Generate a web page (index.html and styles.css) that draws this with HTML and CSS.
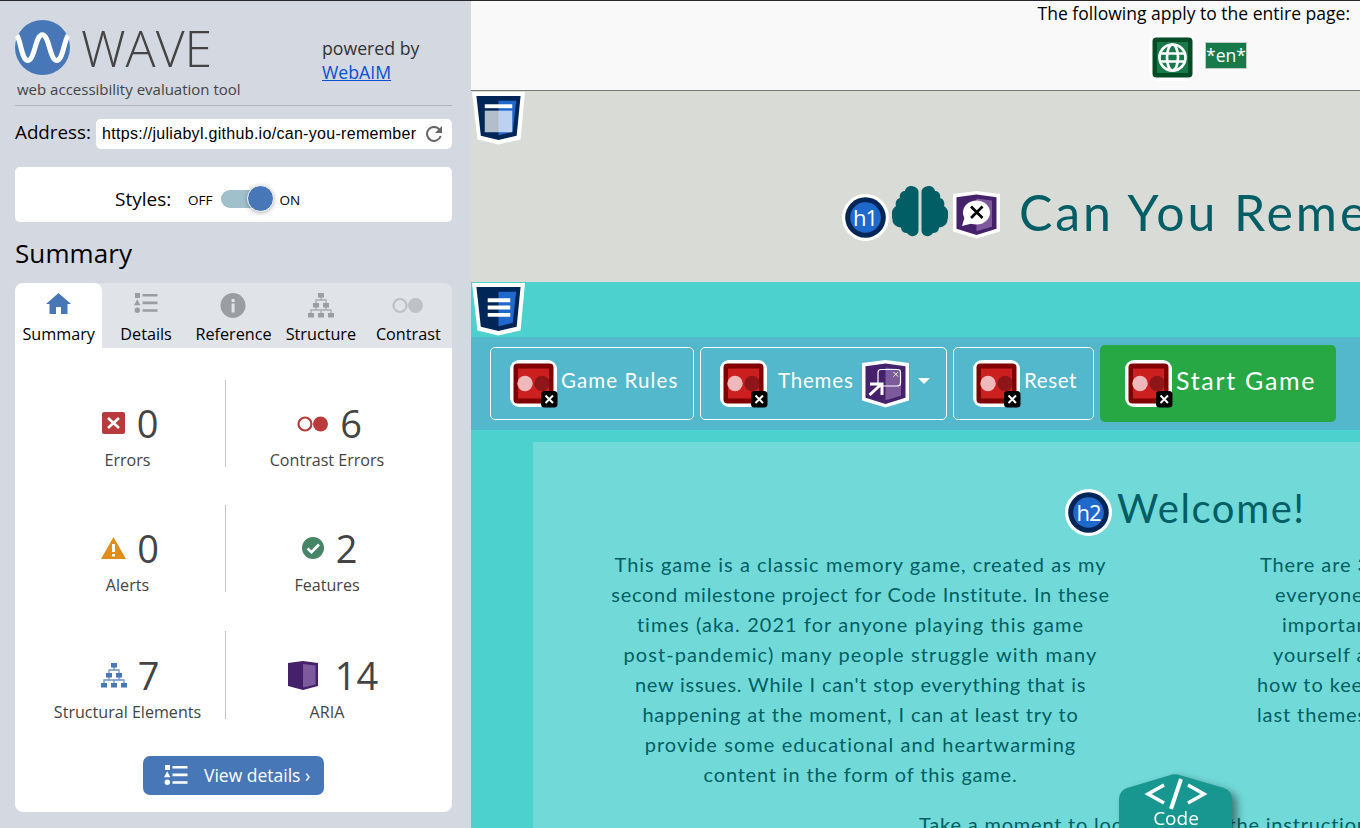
FILE: index.html
```html
<!DOCTYPE html>
<html lang="en">
<head>
<meta charset="utf-8">
<title>WAVE Report</title>
<link rel="stylesheet" href="styles.css">
</head>
<body>
<svg class="defs" width="0" height="0">
  <defs>
    <symbol id="list" viewBox="0 0 24 22"><path d="M1 1h5v5H1zM0 13.300l3.200-6 3.200 6zM8.500 2h15v2.600h-15zM8.500 9.600h15v2.600h-15zM8.500 17.200h15v2.600h-15z"/><circle cx="3.300" cy="18.300" r="2.700"/></symbol>
    <symbol id="tree" viewBox="0 0 26 25"><path d="M10 0h6v4.500h-6zM5 10h6v4.500H5zM15 10h6v4.500h-6zM0 20h6v4.500H0zM10 20h6v4.500h-6zM20 20h6v4.500h-6z"/><path d="M13 4v3M8 10V7h10v3M8 14v3M18 14v3M3 20v-3h20v3M13 17v3" fill="none" stroke="currentColor" stroke-width="1.300" opacity=".8"/></symbol>
    <symbol id="contrast" viewBox="0 0 32 16"><circle cx="8" cy="8" r="6.500" fill="none" stroke="currentColor" stroke-width="2.200"/><circle cx="23.500" cy="8" r="7.500"/></symbol>
    <symbol id="red" viewBox="0 0 48 48"><rect width="47" height="47" rx="9" fill="#fff"/><rect x="3.500" y="3.500" width="40" height="40" rx="4" fill="#800000"/><rect x="8" y="8.500" width="31" height="30" fill="#cc1f1f"/><circle cx="15" cy="23.500" r="7.700" fill="#efb9bb"/><circle cx="32" cy="23.500" r="7.700" fill="#8e1619"/><rect x="31" y="31" width="16.500" height="16.500" rx="3.500" fill="#000"/><path d="M35.500 35.500l7.500 7.500M43 35.500l-7.500 7.500" stroke="#fff" stroke-width="2"/></symbol>
    <symbol id="shield" viewBox="0 0 54 54"><path d="M0 0h54l-4.500 48.300L27 53.500 5.500 48.300z" fill="#fff"/><path d="M4.500 4.200h45L45.500 44.500 27 49 9 44.500z" fill="#002557"/><path d="M27 9h18l-3.500 31.500L27 44z" fill="#2069cc"/></symbol>
    <symbol id="purple" viewBox="0 0 47 48"><path d="M0 3L23.500 0 47 3v37.500L23.500 47.500 0 40.500z" fill="#fff"/><path d="M3.500 6.300l20-2.800 20 2.800v31.400l-20 6.200-20-6.200z" fill="#46216b"/><path d="M23.500 7.500l15.500 2v26.300l-15.500 4.400z" fill="#7c5a9c"/></symbol>
    <symbol id="disc" viewBox="0 0 48 48"><circle cx="23.500" cy="23.500" r="23.500" fill="#fff"/><circle cx="23.500" cy="23.500" r="20.300" fill="#002557"/><circle cx="23.500" cy="23.500" r="15.300" fill="#2069cc"/></symbol>
  </defs>
</svg>
<div class="app">
  <aside class="side">
    <header class="brand">
      <div>
        <div class="logo">
          <svg width="56" height="56" viewBox="0 0 56 56"><circle cx="27.500" cy="27.500" r="27.500" fill="#4877b7"/><path d="M2 15.500C6 21 6.500 40.500 13 40.500S20.500 14.800 27.300 14.800 35 40.500 41.500 40.500 49 21 53 15.500" fill="none" stroke="#fff" stroke-width="5"/></svg>
          <span class="wave">WAVE</span>
        </div>
        <div class="tagline">web accessibility evaluation tool</div>
      </div>
      <div class="powered">powered by<br><a href="#">WebAIM</a></div>
    </header>
    <div class="address"><label>Address:</label><div class="url"><span>https://juliabyl.github.io/can-you-remember</span>
      <svg width="16" height="16" viewBox="0 0 16 16"><path d="M13.400 3.400A7 7 0 1 0 14.700 10" fill="none" stroke="#666" stroke-width="2"/><path d="M16 0v7H9z" fill="#666"/></svg></div></div>
    <div class="styles"><span class="styles-label">Styles:</span><small>OFF</small><span class="switch"><i></i></span><small>ON</small></div>
    <h2>Summary</h2>
    <nav class="tabs">
      <div class="tab active"><svg width="25" height="22" viewBox="0 0 25 22"><path d="M12.500 0L25 11h-3.500v10h-6.500v-7h-5v7H3.500V11H0z"/></svg>Summary</div>
      <div class="tab"><svg class="up" width="24" height="22"><use href="#list"/></svg>Details</div>
      <div class="tab"><svg width="26" height="26" viewBox="0 0 26 26"><circle cx="13" cy="12.500" r="12.500"/><path d="M11.600 6h3v3h-3zM11.600 10.500h3v9h-3z" fill="#e0e3e8"/></svg>Reference</div>
      <div class="tab"><svg width="26" height="25"><use href="#tree"/></svg>Structure</div>
      <div class="tab faint"><svg width="32" height="26" viewBox="0 0 32 26"><use href="#contrast" y="4.500" width="32" height="16"/></svg>Contrast</div>
    </nav>
    <section class="panel">
      <div class="row"><div class="stat left"><div class="num"><svg width="24" height="23" viewBox="0 0 24 23"><rect width="23" height="22" rx="2" fill="#b93a3c"/><path d="M6 6l11 10M17 6L6 16" stroke="#fff" stroke-width="2.600"/></svg>0</div>Errors</div>
      <div class="stat"><div class="num"><svg class="red" width="32" height="16"><use href="#contrast"/></svg>6</div>Contrast Errors</div></div>
      <div class="row"><div class="stat left"><div class="num"><svg width="25" height="23" viewBox="0 0 25 23"><path d="M12.500 0L25 22H0z" fill="#e08d1b"/><path d="M11 7h3v8h-3zM11 17h3v2.500h-3z" fill="#fff"/></svg>0</div>Alerts</div>
      <div class="stat"><div class="num"><svg width="23" height="23" viewBox="0 0 23 23"><circle cx="11" cy="11" r="11" fill="#478567"/><path d="M5.500 11.500l4 3.700 7.500-7.700" fill="none" stroke="#fff" stroke-width="2.600"/></svg>2</div>Features</div></div>
      <div class="row last"><div class="stat left"><div class="num"><svg class="blue" width="26" height="25"><use href="#tree"/></svg>7</div>Structural Elements</div>
      <div class="stat"><div class="num aria"><svg width="30" height="29" viewBox="0 0 30 29"><path d="M0 2l15-2 15 2v23l-15 4-15-4z" fill="#46216b"/><path d="M15 3l12.500 1.500v19L15 26.500z" fill="#7c5a9c"/></svg>14</div>ARIA</div></div>
      <a class="view" href="#"><svg width="24" height="22"><use href="#list"/></svg>View details ›</a>
    </section>
  </aside>
  <main class="page">
    <section class="whole">
      <div class="apply">The following apply to the entire page:</div>
      <div class="lang"><svg width="47" height="47" viewBox="0 0 47 47"><rect width="47" height="47" rx="9" fill="#fff"/><rect x="3.500" y="3.500" width="40" height="40" rx="4" fill="#004d25"/><rect x="8" y="8" width="31" height="31" fill="#18794a"/><g fill="none" stroke="#fff" stroke-width="2.700"><circle cx="23.500" cy="23.500" r="13"/><ellipse cx="23.500" cy="23.500" rx="5.500" ry="13"/><path d="M10.500 19.500h26M10.500 27.500h26"/></g></svg><b>*en*</b></div>
    </section>
    <header class="hero">
      <svg class="shield" width="53" height="53" viewBox="0 0 54 54"><use href="#shield" width="54" height="54"/><path d="M13 12.500h28v4H13z" fill="#fff"/><path d="M13 19h28v22H13z" fill="#fff" opacity=".7"/></svg>
      <h1><svg class="h1i" width="48" height="48"><use href="#disc"/><text x="23" y="32" text-anchor="middle" class="htext">h1</text></svg>
        <svg class="brain" width="56" height="51" viewBox="0 0 56 51"><path id="lobe" d="M26.500 6C26.500 1 21 0 18 0 14 1 13 4 13 5 9 5 7 9 8 12 4 13 3 17 4 20-1 23-1 30 0.500 33 0 38 4 41 9 41.500 9 46 13 47 15 47 18 52 26.500 51 26.500 44z"/><use href="#lobe" transform="matrix(-1 0 0 1 56 0)"/></svg>
        <svg class="bubble" width="47" height="48"><use href="#purple"/><ellipse cx="23.500" cy="21.500" rx="13.500" ry="12" fill="#fff"/><path d="M12 25l-3 10 12-3z" fill="#fff"/><path d="M18 15.500l11.500 11.500M29.500 15.500L18 27" stroke="#000" stroke-width="2.700"/></svg>
        <span>Can You Remember</span></h1>
    </header>
    <div class="band"><svg class="shield" width="53" height="53" viewBox="0 0 54 54"><use href="#shield" width="54" height="54"/><path d="M16 15.500h23v4H16zM16 23h23v4H16zM16 30.500h23v4H16z" fill="#fff"/></svg></div>
    <nav class="bar">
      <div class="btn rules"><svg width="48" height="48"><use href="#red"/></svg><span>Game Rules</span></div>
      <div class="btn themes"><svg width="48" height="48"><use href="#red"/></svg><span>Themes</span><svg class="popup" width="47" height="48"><use href="#purple"/><rect x="16" y="9.500" width="22.500" height="16.500" rx="3" fill="none" stroke="#fff" stroke-width="1.200"/><path d="M31.500 12l4.500 4.500M36 12l-4.500 4.500" stroke="#fff" stroke-width="1"/><path d="M7.500 35L20 23.500M8 24h12v11" fill="none" stroke="#fff" stroke-width="3"/></svg><i class="caret"></i></div>
      <div class="btn reset"><svg width="48" height="48"><use href="#red"/></svg><span>Reset</span></div>
      <div class="btn start"><svg width="48" height="48"><use href="#red"/></svg><span>Start Game</span></div>
    </nav>
    <section class="content">
      <h3><svg width="48" height="48"><use href="#disc"/><text x="23.500" y="32" text-anchor="middle" class="htext">h2</text></svg><span>Welcome!</span></h3>
      <div class="cols">
        <p class="first"><span class="wide">This game is a classic memory game, created as my</span><span class="tight">second milestone project for Code Institute. In these</span><span class="wider">times (aka. 2021 for anyone playing this game</span><span class="widest">post-pandemic) many people struggle with many</span><span class="tight">new issues. While I can't stop everything that is</span><span>happening at the moment, I can at least try to</span><span class="wider">provide some educational and heartwarming</span><span>content in the form of this game.</span></p>
        <p class="second"><span class="in-a">There are 3</span><span class="in-b">everyone</span><span class="in-c">important</span><span class="in-d">yourself and</span><span>how to keep</span><span>last themes</span></p>
      </div>
      <p class="take">Take a moment to look through <span>the instructions</span></p>
    </section>
  </main>
</div>
<div class="code"><svg width="140" height="64" viewBox="0 0 140 64"><path d="M50 1.500Q56 -1 62 1.500L105 14Q113 17 113 25V64H0V25Q0 17 8 14z" fill="#189790"/><path d="M45 11L29 20 45 29M69 11l16 9L69 29" fill="none" stroke="#fff" stroke-width="3.500"/><path d="M62 5L52 35" stroke="#fff" stroke-width="4"/></svg><span>Code</span></div>
</body>
</html>
```
FILE: styles.css
```css
* { box-sizing: border-box; }
body { margin: 0; height: 828px; overflow: hidden; font-family: "Open Sans", sans-serif; color: #000; }
svg { flex: none; display: block; }
.defs { position: absolute; }
.app { display: flex; height: 828px; border-top: 1px solid #28282c; }

.side { width: 471px; flex: none; background: #d4d8e0; padding: 0 19px 0 15px; }
.brand { display: flex; height: 105px; border-bottom: 1px solid #b0b6ba; padding-top: 19px; }
.brand > div:first-child { width: 307px; }
.logo { display: flex; height: 56px; }
.wave { font-weight: 300; font-size: 50px; line-height: 56px; color: #444; margin-left: 10px; }
.tagline { font-size: 15px; line-height: 22px; color: #444; margin: 2px 0 0 2px; }
.powered { font-size: 17.700px; line-height: 24px; color: #333; padding-top: 16px; }
.powered a { color: #0a4fd0; }
.address { display: flex; height: 61px; padding-top: 13px; }
.address label { width: 81px; font-size: 18.800px; line-height: 26px; }
.url { flex: 1; height: 30px; border-radius: 5px; background: #fff; display: flex; align-items: center; justify-content: space-between; padding: 0 10px 0 6px; font: 16px "Liberation Sans", sans-serif; letter-spacing: .3px; }
.styles { height: 55px; background: #fff; border-radius: 5px; display: flex; align-items: center; padding: 9px 0 0 100px; }
.styles-label { font-size: 19px; width: 73px; }
small { font-size: 13.500px; line-height: 20px; padding-top: 2px; }
.switch { width: 52px; flex: none; height: 18px; border-radius: 9px; background: #a0c0cb; margin: -1px 6px 0 9px; display: flex; align-items: center; justify-content: flex-end; }
.switch i { width: 27px; height: 27px; margin-right: -1px; border-radius: 50%; background: #4877b7; border: 1px solid #fff; box-shadow: 0 1px 4px rgba(0,0,0,.3); }
h2 { margin: 0; font-size: 26px; font-weight: 400; line-height: 36px; padding: 13px 0 11px; height: 61px; letter-spacing: .1px; }
.tabs { display: grid; grid-template-columns: repeat(5, 1fr); height: 65px; background: #e0e3e8; border-radius: 8px 8px 0 0; color: #000; }
.tab { display: flex; flex-direction: column; align-items: center; justify-content: space-between; font-size: 16.200px; line-height: 24px; padding: 10px 0 2px; }
.tab svg { fill: #9a9ea2; color: #9a9ea2; }
.tab .up { margin-top: -1px; }
.tab.active { background: #fff; border-radius: 8px 8px 0 0; }
.tab.active svg { fill: #4877b7; }
.tab.faint svg { fill: #bec1c6; color: #bec1c6; }
.panel { background: #fff; height: 464px; border-radius: 0 0 8px 8px; padding-top: 32px; }
.row { height: 125px; display: flex; }
.row.last { height: 126px; padding-top: 1px; }
.stat { flex: 1; height: 87px; text-align: center; font-size: 16.100px; line-height: 22px; color: #444; padding: 18px 24px 0 0; }
.stat.left { flex: 0 0 211px; border-right: 1px solid #c4c6c9; padding: 18px 0 0 15px; }
.last .stat, .last .stat.left { height: 88px; padding-top: 19px; }
.num { display: flex; align-items: center; justify-content: center; gap: 11px; font-size: 38px; line-height: 50px; margin-bottom: 1px; padding-left: 5px; }
.num svg { margin-top: 1px; }
.num.aria { gap: 17px; padding-left: 12px; }
.red { fill: #b93a3c; color: #b93a3c; }
.blue { fill: #4877b7; color: #4877b7; }
.view { display: flex; align-items: center; gap: 16px; width: 181px; height: 39px; margin-left: 128px; padding: 0 0 2px 21px; border-radius: 7px; background: #4877b7; color: #fff; fill: #fff; text-decoration: none; font-size: 17.500px; white-space: nowrap; }

.page { width: 889px; overflow: hidden; background: #4dd1cf; color: #005e64; font-family: Lato, sans-serif; }
.whole { height: 90px; background: #f9f9f9; border-bottom: 1px solid #747a6f; color: #000; font-family: "Open Sans", sans-serif; font-size: 17.550px; }
.apply { line-height: 24px; height: 26px; text-align: right; padding-right: 10px; }
.lang { display: flex; padding: 7px 0 0 678px; }
.lang b { font-weight: 400; background: #18794a; color: #fff; border: 1px solid #c8c8c8; height: 27px; line-height: 25px; margin: 8px 0 0 9px; }
.hero { height: 191px; background: #d9dbd6; padding: 1px; }
h1 { margin: 41px 0 0 370px; display: flex; font-weight: 400; font-size: 50px; height: 58px; white-space: nowrap; }
.h1i { margin-top: 8px; }
.brain { fill: #005e64; margin: 0 0 0 2px; }
.bubble { margin: 5px 0 0 5px; }
h1 span { margin-left: 19px; line-height: 53px; letter-spacing: 2.900px; }
.band { height: 55px; padding: 1px; }
.bar { height: 93px; background: #53b8cb; display: flex; align-items: center; padding-left: 19px; color: #fff; font-size: 20.500px; }
.btn { flex: none; height: 73px; border: 1px solid #fff; border-radius: 5px; display: flex; align-items: center; padding-left: 19px; margin-right: 6px; white-space: nowrap; }
.btn span { margin: -8px 0 0 3px; letter-spacing: 1.100px; }
.rules { width: 204px; }
.themes { width: 247px; }
.themes span { margin-left: 10px; width: 76px; letter-spacing: .8px; }
.popup { margin-left: 8px; }
.caret { border: 6px solid transparent; border-top-color: #fff; border-bottom: 0; margin: -6px 0 0 9px; }
.reset { width: 141px; }
.reset span { letter-spacing: .6px; }
.start { width: 236px; height: 77px; background: #28a745; border: 0; padding-left: 25px; font-size: 25px; }
.start span { letter-spacing: 1.700px; }
.content { margin: 12px 0 0 62px; height: 400px; background: #71dad8; padding-top: 47px; }
h3 { display: flex; margin: 0 0 0 532px; height: 60px; font-size: 40px; font-weight: 400; line-height: 39px; }
h3 span { margin-left: 4px; letter-spacing: 1.600px; }
.cols { display: flex; height: 260px; font-size: 20px; line-height: 30px; white-space: nowrap; }
p { margin: 0; letter-spacing: .9px; }
.first { width: 655px; flex: none; text-align: center; letter-spacing: .790px; word-spacing: .2px; }
.first span { display: block; }
.first .tight { letter-spacing: .720px; }
.first .wide { letter-spacing: .950px; }
.first .wider { letter-spacing: 1.020px; }
.first .widest { letter-spacing: 1.080px; }
.second { margin-left: 69px; }
.second span { display: block; }
.second .in-a { padding-left: 3px; }
.second .in-b { padding-left: 18px; }
.second .in-c { padding-left: 25px; }
.second .in-d { padding-left: 16px; }
.take { padding-left: 386px; font-size: 20px; line-height: 30px; white-space: nowrap; letter-spacing: .8px; }
.take span { margin-left: 7px; }
.code { position: absolute; left: 1119px; top: 774px; width: 140px; height: 54px; overflow: hidden; filter: drop-shadow(5px 4px 4px rgba(0,0,0,.45)); }
.code span { position: absolute; left: 0; top: 31px; width: 114px; text-align: center; color: #fff; font-size: 19px; line-height: 26px; }
.htext { font: 22px "Open Sans", sans-serif; letter-spacing: -1px; fill: #fff; }
```
